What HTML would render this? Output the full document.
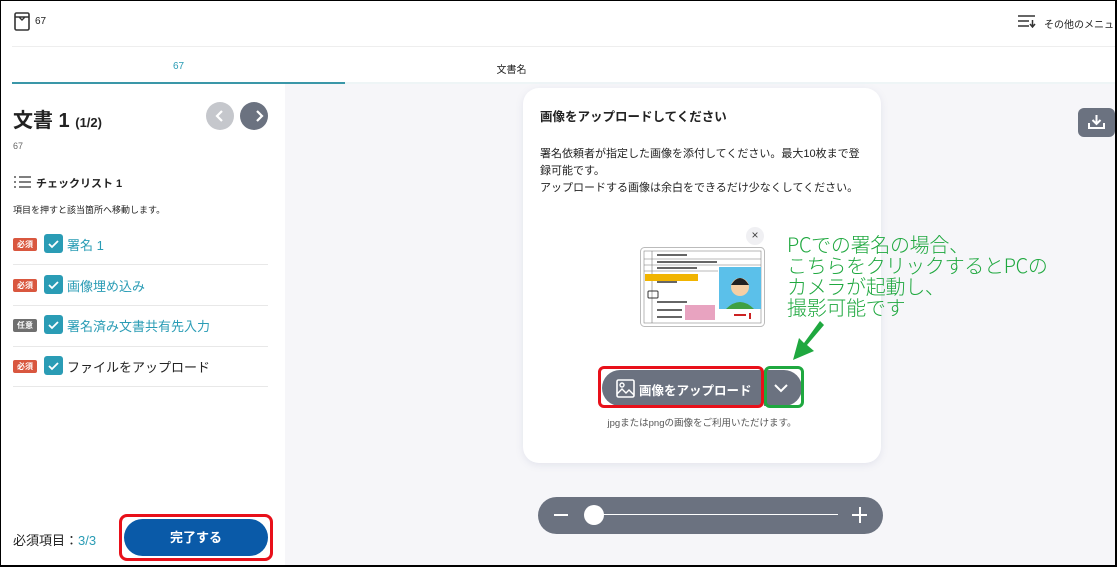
<!DOCTYPE html><html><head><meta charset="utf-8"><style>
*{box-sizing:border-box;margin:0;padding:0}
body{width:1117px;height:567px;overflow:hidden;font-family:"Liberation Sans","Noto Sans CJK JP",sans-serif;color:#222;background:#fff;position:relative}
.a{position:absolute}
.frame{position:absolute;inset:0;border:1px solid #000;border-right-width:2px;border-bottom-width:2px;pointer-events:none;z-index:10}
.badge{position:absolute;left:13px;width:24px;height:13px;border-radius:2px;color:#fff;font-size:8px;font-weight:bold;text-align:center;line-height:13px}
.cb{position:absolute;left:44px;width:19px;height:19px;border-radius:3px;background:#2a9cb5}
.it{position:absolute;left:67px;font-size:13px;color:#2a9cb5}
.sep{position:absolute;left:13px;width:255px;height:1px;background:#e8e8e8}
.g{color:#1fa83f;font-size:20px;line-height:21px;font-family:"Noto Sans CJK JP",sans-serif;font-weight:300;letter-spacing:-0.3px}
</style></head><body>
<div class="frame"></div>
<svg class="a" style="left:14px;top:12px" width="16" height="19" viewBox="0 0 16 19"><rect x="1" y="1" width="14" height="17" rx="1.5" fill="none" stroke="#333" stroke-width="1.6"/><path d="M1 5h14M5 5l3 3 3-3" fill="none" stroke="#333" stroke-width="1.4"/></svg>
<div class="a" style="left:35px;top:16px;font-size:10px">67</div>
<svg class="a" style="left:1018px;top:15px" width="18" height="13" viewBox="0 0 18 13"><path d="M0 1h17M0 6h11M0 11h11" stroke="#333" stroke-width="1.6"/><path d="M14.5 5v6M12 9l2.5 3 2.5-3" fill="none" stroke="#333" stroke-width="1.5"/></svg>
<div class="a" style="left:1044px;top:16px;font-size:10px;white-space:nowrap">その他のメニュー</div>
<div class="a" style="left:12px;top:46px;width:1105px;height:1px;background:#eee"></div>
<div class="a" style="left:12px;top:61px;width:333px;text-align:center;font-size:10px;color:#2a9cb5">67</div>
<div class="a" style="left:345px;top:61px;width:333px;text-align:center;font-size:10px">文書名</div>
<div class="a" style="left:12px;top:82px;width:333px;height:2px;background:#3a97a8"></div>
<div class="a" style="left:345px;top:82px;width:772px;height:2px;background:#eef5f6"></div>
<div class="a" style="left:285px;top:84px;width:832px;height:483px;background:#f6f6f9"></div>
<div class="a" style="left:13px;top:104px;font-size:20px;font-weight:bold;white-space:nowrap">文書 1 <span style="font-size:13px">(1/2)</span></div>
<div class="a" style="left:206px;top:102px;width:28px;height:28px;border-radius:50%;background:#c5c7cc"></div>
<div class="a" style="left:240px;top:102px;width:28px;height:28px;border-radius:50%;background:#6b7280"></div>
<svg class="a" style="left:206px;top:102px" width="62" height="28"><path d="M16 9l-5 5 5 5" fill="none" stroke="#fff" stroke-width="2.2"/><path d="M51 9l5 5-5 5" fill="none" stroke="#fff" stroke-width="2.2"/></svg>
<div class="a" style="left:13px;top:141px;font-size:9px;color:#666">67</div>
<svg class="a" style="left:14px;top:176px" width="18" height="12"><path d="M0 1h2M0 6h2M0 11h2M5 1h12M5 6h12M5 11h12" stroke="#333" stroke-width="1.3"/></svg>
<div class="a" style="left:36px;top:175px;font-size:11px;font-weight:bold">チェックリスト 1</div>
<div class="a" style="left:13px;top:203px;font-size:9px">項目を押すと該当箇所へ移動します。</div>
<div class="badge" style="top:238px;background:#d9573f">必須</div><div class="cb" style="top:234px"></div><div class="it" style="top:235px">署名 1</div><div class="sep" style="top:264px"></div>
<div class="badge" style="top:279px;background:#d9573f">必須</div><div class="cb" style="top:275px"></div><div class="it" style="top:276px">画像埋め込み</div><div class="sep" style="top:305px"></div>
<div class="badge" style="top:319px;background:#6f6f6f">任意</div><div class="cb" style="top:315px"></div><div class="it" style="top:316px">署名済み文書共有先入力</div><div class="sep" style="top:346px"></div>
<div class="badge" style="top:360px;background:#d9573f">必須</div><div class="cb" style="top:356px"></div><div class="it" style="top:357px;color:#222">ファイルをアップロード</div><div class="sep" style="top:386px"></div>
<svg class="a" style="left:44px;top:234px" width="19" height="145"><g fill="none" stroke="#fff" stroke-width="1.8"><path d="M5 10l3 3 6-6"/><path d="M5 51l3 3 6-6"/><path d="M5 91l3 3 6-6"/><path d="M5 132l3 3 6-6"/></g></svg>
<div class="a" style="left:13px;top:530px;font-size:13px">必須項目：<span style="color:#2a9cb5">3/3</span></div>
<div class="a" style="left:119px;top:514px;width:154px;height:47px;border:3px solid #e8101a;border-radius:8px"></div>
<div class="a" style="left:124px;top:519px;width:144px;height:37px;border-radius:19px;background:#0a5aa8;color:#fff;font-weight:bold;font-size:13px;text-align:center;line-height:37px">完了する</div>
<div class="a" style="left:523px;top:88px;width:358px;height:375px;background:#fff;border-radius:16px;box-shadow:0 2px 8px rgba(120,130,170,.15)"></div>
<div class="a" style="left:540px;top:106px;font-size:12.5px;font-weight:bold">画像をアップロードしてください</div>
<div class="a" style="left:540px;top:146px;width:326px;font-size:11px;line-height:17px">署名依頼者が指定した画像を添付してください。最大10枚まで登録可能です。<br>アップロードする画像は余白をできるだけ少なくしてください。</div>
<svg class="a" style="left:640px;top:247px" width="125" height="80" viewBox="0 0 125 80"><rect x="0.5" y="0.5" width="124" height="79" rx="4" fill="#fff" stroke="#bbb"/><rect x="4" y="4" width="117" height="72" fill="#fff" stroke="#888" stroke-width=".6"/><path d="M4 12h117M4 18h117M4 24h74M12 4v72" stroke="#777" stroke-width=".6"/><g stroke="#333" stroke-width="1.5"><path d="M17 8h30M17 15h60M17 21h40M17 35h20M17 55h30M17 63h25M17 70h25"/></g><rect x="5" y="27" width="53" height="7" fill="#f1b400"/><rect x="79" y="20" width="42" height="42" fill="#5bc0ea"/><circle cx="100" cy="40" r="9" fill="#f5cfa5"/><path d="M91 38q9-14 18 0" fill="#222"/><path d="M86 62q14-14 28 0z" fill="#3fa043"/><rect x="45" y="58" width="30" height="15" fill="#e8a3c0"/><rect x="8" y="44" width="10" height="7" rx="1" fill="none" stroke="#333"/><path d="M94 68h12M110 66v6" stroke="#c22" stroke-width="2"/></svg>
<div class="a" style="left:746px;top:227px;width:18px;height:18px;border-radius:50%;background:#f0f0f3;font-size:12px;text-align:center;line-height:17px;color:#444">×</div>
<div class="a" style="left:602px;top:370px;width:200px;height:36px;border-radius:18px;background:#6b7280"></div>
<div class="a" style="left:762px;top:370px;width:2px;height:36px;background:#fff"></div>
<svg class="a" style="left:616px;top:379px" width="19" height="19" viewBox="0 0 19 19"><rect x="1" y="1" width="17" height="17" rx="1.5" fill="none" stroke="#fff" stroke-width="1.6"/><circle cx="6" cy="6" r="2" fill="none" stroke="#fff" stroke-width="1.4"/><path d="M1 15l5-5 4 4 3-3 5 5" fill="none" stroke="#fff" stroke-width="1.4"/></svg>
<div class="a" style="left:639px;top:380px;font-size:12.5px;font-weight:bold;color:#fff">画像をアップロード</div>
<svg class="a" style="left:773px;top:382px" width="16" height="12"><path d="M2 3l6 6 6-6" fill="none" stroke="#fff" stroke-width="2"/></svg>
<div class="a" style="left:598px;top:366px;width:166px;height:42px;border:3px solid #e8101a;border-radius:6px"></div>
<div class="a" style="left:764px;top:366px;width:40px;height:42px;border:3px solid #1fa83f;border-radius:6px"></div>
<div class="a" style="left:523px;top:415px;width:358px;text-align:center;font-size:9.5px;color:#555">jpgまたはpngの画像をご利用いただけます。</div>
<div class="a g" style="left:787px;top:233px;white-space:nowrap">PCでの署名の場合、<br>こちらをクリックするとPCの<br>カメラが起動し、<br>撮影可能です</div>
<svg class="a" style="left:785px;top:318px" width="50" height="46" viewBox="0 0 50 46"><path d="M35 3L39 7 22 27 29 33 8 42 14 20 19 25z" fill="#1fa83f"/></svg>
<div class="a" style="left:1078px;top:108px;width:37px;height:29px;border-radius:6px;background:#6b7280"></div>
<svg class="a" style="left:1087px;top:114px" width="19" height="16"><path d="M9.5 1v9M5.5 6l4 4 4-4" fill="none" stroke="#fff" stroke-width="2"/><path d="M2 9v5h15V9" fill="none" stroke="#fff" stroke-width="2"/></svg>
<div class="a" style="left:538px;top:497px;width:345px;height:37px;border-radius:19px;background:#6b7280"></div>
<div class="a" style="left:554px;top:514px;width:14px;height:2px;background:#fff"></div>
<div class="a" style="left:600px;top:514px;width:238px;height:1px;background:#fff"></div>
<div class="a" style="left:584px;top:505px;width:20px;height:20px;border-radius:50%;background:#fff"></div>
<div class="a" style="left:852px;top:514px;width:15px;height:2px;background:#fff"></div>
<div class="a" style="left:859px;top:507px;width:2px;height:16px;background:#fff"></div>
</body></html>
